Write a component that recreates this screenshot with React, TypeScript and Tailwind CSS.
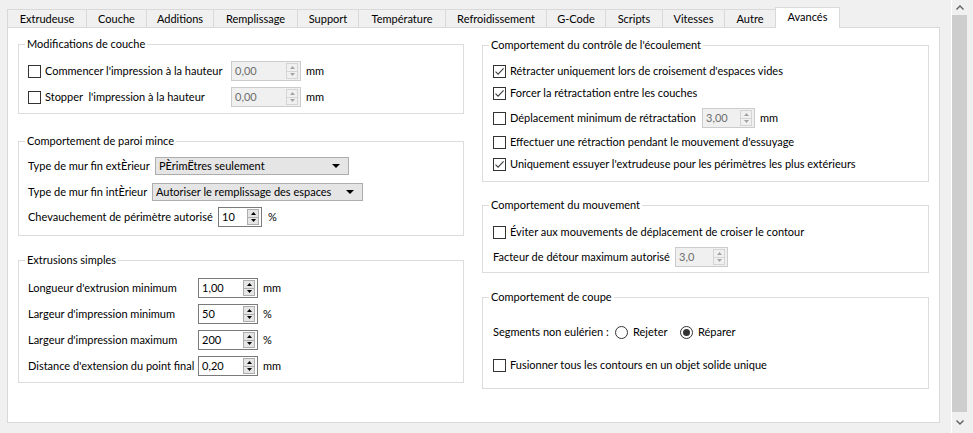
import React from "react";

function Check({ checked = false }: { checked?: boolean }) {
  return (
    <span className="flex h-[13px] w-[13px] shrink-0 items-center justify-center border border-[#333333] bg-white">
      {checked && (
        <svg width="11" height="11" viewBox="0 0 11 11">
          <path d="M1.5 5.6 L4.1 8.2 L9.6 2.4" stroke="#3c3c3c" strokeWidth="1.1" fill="none" />
        </svg>
      )}
    </span>
  );
}

function Radio({ checked = false }: { checked?: boolean }) {
  return (
    <span className="flex h-[13px] w-[13px] shrink-0 items-center justify-center rounded-full border border-[#333333] bg-white">
      {checked && <span className="h-[7px] w-[7px] rounded-full bg-[#333333]" />}
    </span>
  );
}

function Arrow({ up, color }: { up: boolean; color: string }) {
  return (
    <svg width="5" height="3" viewBox="0 0 5 3">
      <path d={up ? "M0 3 L2.5 0 L5 3 Z" : "M0 0 L2.5 3 L5 0 Z"} fill={color} />
    </svg>
  );
}

function Spin({ value, w, disabled = false }: { value: string; w: string; disabled?: boolean }) {
  const box = disabled
    ? "border-[#cccccc] bg-[#f0f0f0] text-[#6d6d6d]"
    : "border-[#7a7a7a] bg-white text-black";
  const btn = disabled ? "border-[#d4d4d4] bg-[#f0f0f0]" : "border-[#adadad] bg-[#e5e5e5]";
  const sep = disabled ? "border-[#d4d4d4]" : "border-[#adadad]";
  const ac = disabled ? "#a3a3a3" : "#000000";
  return (
    <div className={`flex h-[20px] shrink-0 items-center border ${w} ${box}`}>
      <span className="flex-1 pl-[3px] leading-[18px]">{value}</span>
      <div className={`mr-[2px] flex h-[16px] w-[12px] flex-col border ${btn}`}>
        <div className={`flex flex-1 items-center justify-center border-b ${sep}`}>
          <Arrow up color={ac} />
        </div>
        <div className="flex flex-1 items-center justify-center">
          <Arrow up={false} color={ac} />
        </div>
      </div>
    </div>
  );
}

function Combo({ value, w }: { value: string; w: string }) {
  return (
    <div className={`flex h-[18px] shrink-0 items-center border border-[#adadad] bg-[#e5e5e5] ${w}`}>
      <span className="flex-1 pl-[3px] leading-[16px]">{value}</span>
      <svg width="8" height="4" viewBox="0 0 8 4" className="mr-[8px]">
        <path d="M0 0 L4 4 L8 0 Z" fill="#000" />
      </svg>
    </div>
  );
}

function Group({
  title,
  className,
  children,
}: {
  title: string;
  className: string;
  children: React.ReactNode;
}) {
  return (
    <div className={`relative border border-[#dcdcdc] ${className}`}>
      <span className="absolute left-[6px] top-[-9px] bg-white px-[2px] leading-[15px]">{title}</span>
      {children}
    </div>
  );
}

const tabs: [string, string][] = [
  ["Extrudeuse", "w-[79px]"],
  ["Couche", "w-[60px]"],
  ["Additions", "w-[67px]"],
  ["Remplissage", "w-[84px]"],
  ["Support", "w-[61px]"],
  ["Température", "w-[87px]"],
  ["Refroidissement", "w-[101px]"],
  ["G-Code", "w-[59px]"],
  ["Scripts", "w-[57px]"],
  ["Vitesses", "w-[62px]"],
  ["Autre", "w-[51px]"],
];

export default function App() {
  return (
    <div className="flex h-[433px] w-[973px] overflow-hidden bg-[#f0f0f0] font-['Lato',sans-serif] text-[11px] text-black">
      <div className="flex w-[951px] shrink-0 flex-col pl-[7px] pt-[7px]">
        {/* tabs */}
        <div className="flex h-[20px] items-end">
          {tabs.map(([t, w]) => (
            <div
              key={t}
              className={`flex h-[18px] items-center justify-center border-l border-t border-[#d9d9d9] bg-[#f0f0f0] pt-[1px] ${w}`}
            >
              {t}
            </div>
          ))}
          <div className="relative z-10 -mb-px flex h-[21px] w-[65px] items-center justify-center border-l border-r border-t border-[#d9d9d9] bg-white pb-[2px]">
            Avancés
          </div>
        </div>
        {/* pane */}
        <div className="flex h-[396px] w-[933px] gap-[18px] border border-[#d9d9d9] bg-white pl-[10px]">
          {/* left column */}
          <div className="flex w-[446px] flex-col pt-[16px]">
            <Group title="Modifications de couche" className="h-[70px] pl-[9px] pt-[16px]">
              <div className="flex h-[20px] items-center">
                <div className="flex w-[203px] items-center gap-[4px]">
                  <Check />
                  <span>Commencer l'impression à la hauteur</span>
                </div>
                <Spin value="0,00" w="w-[70px]" disabled />
                <span className="ml-[5px]">mm</span>
              </div>
              <div className="mt-[6px] flex h-[20px] items-center">
                <div className="flex w-[203px] items-center gap-[4px]">
                  <Check />
                  <span className="whitespace-pre">Stopper  l'impression à la hauteur</span>
                </div>
                <Spin value="0,00" w="w-[70px]" disabled />
                <span className="ml-[5px]">mm</span>
              </div>
            </Group>

            <Group title="Comportement de paroi mince" className="mt-[27px] h-[95px] pl-[9px] pt-[14px]">
              <div className="flex h-[20px] items-center">
                <span className="w-[127px]">Type de mur fin extÈrieur</span>
                <Combo value="PÈrimËtres seulement" w="w-[194px]" />
              </div>
              <div className="mt-[6px] flex h-[20px] items-center">
                <span className="w-[124px]">Type de mur fin intÈrieur</span>
                <Combo value="Autoriser le remplissage des espaces" w="w-[211px]" />
              </div>
              <div className="mt-[5px] flex h-[20px] items-center">
                <span className="w-[190px]">Chevauchement de périmètre autorisé</span>
                <Spin value="10" w="w-[44px]" />
                <span className="ml-[6px]">%</span>
              </div>
            </Group>

            <Group title="Extrusions simples" className="mt-[24px] h-[123px] pl-[9px] pt-[17px]">
              {[
                ["Longueur d'extrusion minimum", "1,00", "mm"],
                ["Largeur d'impression minimum", "50", "%"],
                ["Largeur d'impression maximum", "200", "%"],
                ["Distance d'extension du point final", "0,20", "mm"],
              ].map(([l, v, u], i) => (
                <div key={l} className={`flex h-[20px] items-center ${i > 0 ? "mt-[6px]" : ""}`}>
                  <span className="w-[170px]">{l}</span>
                  <Spin value={v} w="w-[60px]" />
                  <span className="ml-[5px]">{u}</span>
                </div>
              ))}
            </Group>
          </div>

          {/* right column */}
          <div className="flex w-[447px] flex-col pt-[17px]">
            <Group title="Comportement du contrôle de l'écoulement" className="h-[137px] pl-[10px] pt-[15px]">
              <div className="flex h-[20px] items-center gap-[4px]">
                <Check checked />
                <span>Rétracter uniquement lors de croisement d'espaces vides</span>
              </div>
              <div className="mt-[2px] flex h-[20px] items-center gap-[4px]">
                <Check checked />
                <span>Forcer la rétractation entre les couches</span>
              </div>
              <div className="mt-[5px] flex h-[20px] items-center">
                <div className="flex w-[209px] items-center gap-[4px]">
                  <Check />
                  <span>Déplacement minimum de rétractation</span>
                </div>
                <Spin value="3,00" w="w-[53px]" disabled />
                <span className="ml-[5px]">mm</span>
              </div>
              <div className="mt-[4px] flex h-[20px] items-center gap-[4px]">
                <Check />
                <span>Effectuer une rétraction pendant le mouvement d'essuyage</span>
              </div>
              <div className="mt-[2px] flex h-[20px] items-center gap-[4px]">
                <Check checked />
                <span>Uniquement essuyer l'extrudeuse pour les périmètres les plus extérieurs</span>
              </div>
            </Group>

            <Group title="Comportement du mouvement" className="mt-[23px] h-[68px] pl-[10px] pt-[16px]">
              <div className="flex h-[20px] items-center gap-[4px]">
                <Check />
                <span>Éviter aux mouvements de déplacement de croiser le contour</span>
              </div>
              <div className="mt-[5px] flex h-[20px] items-center">
                <span className="w-[182px]">Facteur de détour maximum autorisé</span>
                <Spin value="3,0" w="w-[53px]" disabled />
              </div>
            </Group>

            <Group title="Comportement de coupe" className="mt-[24px] h-[92px] pl-[10px] pt-[24px]">
              <div className="flex h-[20px] items-center">
                <span className="w-[122px]">Segments non eulérien :</span>
                <div className="flex w-[65px] items-center gap-[5px]">
                  <Radio />
                  <span>Rejeter</span>
                </div>
                <div className="flex items-center gap-[5px]">
                  <Radio checked />
                  <span>Réparer</span>
                </div>
              </div>
              <div className="mt-[13px] flex h-[20px] items-center gap-[4px]">
                <Check />
                <span>Fusionner tous les contours en un objet solide unique</span>
              </div>
            </Group>
          </div>
        </div>
      </div>

      {/* scrollbar */}
      <div className="flex w-[17px] shrink-0 flex-col border-l border-white">
        <div className="flex h-[15px] items-center justify-center">
          <svg width="8" height="5" viewBox="0 0 8 5">
            <path d="M0.5 4.5 L4 1 L7.5 4.5" stroke="#606060" strokeWidth="1.4" fill="none" />
          </svg>
        </div>
        <div className="mr-[1px] h-[397px] bg-[#cdcdcd]" />
        <div className="flex flex-1 items-center justify-center">
          <svg width="8" height="5" viewBox="0 0 8 5">
            <path d="M0.5 0.5 L4 4 L7.5 0.5" stroke="#606060" strokeWidth="1.4" fill="none" />
          </svg>
        </div>
      </div>
    </div>
  );
}
